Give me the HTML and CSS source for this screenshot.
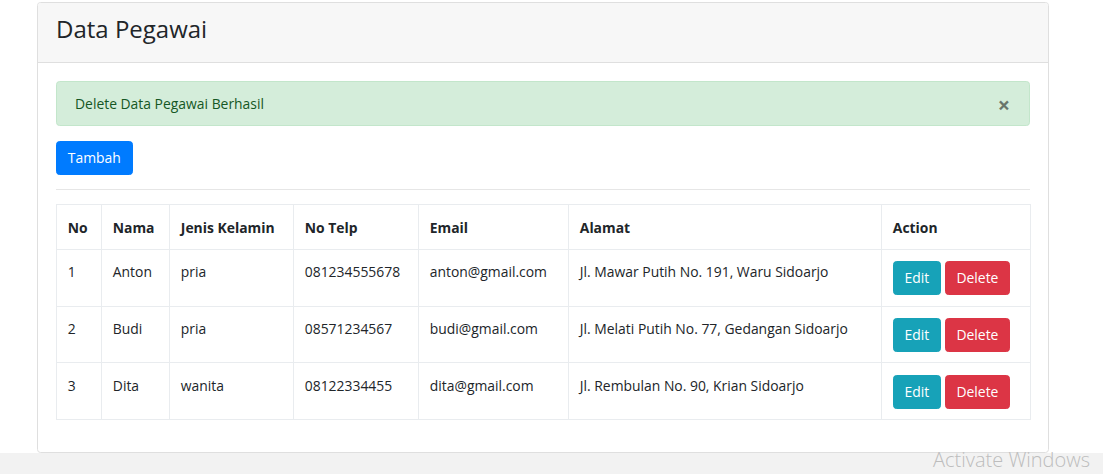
FILE: index.html
```html
<!DOCTYPE html>
<html lang="id">
<head>
<meta charset="utf-8">
<title>Data Pegawai</title>
<link rel="stylesheet" href="styles.css">
</head>
<body>
<div class="page">
  <div class="card">
    <div class="card-header">
      <h3 class="card-title">Data Pegawai</h3>
    </div>
    <div class="card-body">
      <div class="alert">
        <span>Delete Data Pegawai Berhasil</span>
        <button class="close" type="button">&times;</button>
      </div>
      <button class="btn btn-primary" type="button">Tambah</button>
      <hr class="divider">
      <table class="table">
        <colgroup>
          <col class="c-no"><col class="c-nama"><col class="c-jk"><col class="c-telp"><col class="c-email"><col class="c-alamat"><col class="c-action">
        </colgroup>
        <thead>
          <tr><th>No</th><th>Nama</th><th>Jenis Kelamin</th><th>No Telp</th><th>Email</th><th>Alamat</th><th>Action</th></tr>
        </thead>
        <tbody>
          <tr><td>1</td><td>Anton</td><td>pria</td><td>081234555678</td><td>anton@gmail.com</td><td>Jl. Mawar Putih No. 191, Waru Sidoarjo</td><td><button class="btn btn-info" type="button">Edit</button> <button class="btn btn-danger" type="button">Delete</button></td></tr>
          <tr><td>2</td><td>Budi</td><td>pria</td><td>08571234567</td><td>budi@gmail.com</td><td>Jl. Melati Putih No. 77, Gedangan Sidoarjo</td><td><button class="btn btn-info" type="button">Edit</button> <button class="btn btn-danger" type="button">Delete</button></td></tr>
          <tr><td>3</td><td>Dita</td><td>wanita</td><td>08122334455</td><td>dita@gmail.com</td><td>Jl. Rembulan No. 90, Krian Sidoarjo</td><td><button class="btn btn-info" type="button">Edit</button> <button class="btn btn-danger" type="button">Delete</button></td></tr>
        </tbody>
      </table>
    </div>
  </div>
</div>
<div class="footer"></div>
<div class="watermark">Activate Windows</div>
</body>
</html>
```

FILE: styles.css
```css
html, body {
  margin: 0;
  padding: 0;
}
body {
  font-family: "Open Sans", "Noto Sans", sans-serif;
  font-size: 13.9px;
  line-height: 21.6px;
  color: #212529;
  background: #fff;
  height: 474px;
  overflow: hidden;
  position: relative;
}
.page {
  padding-top: 2px;
  padding-left: 37px;
  background: #fff;
}
.card {
  width: 1012px;
  box-sizing: border-box;
  border: 1px solid #dfdfdf;
  border-radius: 3.6px;
  background: #fff;
}
.card-header {
  background: #f7f7f7;
  border-bottom: 1px solid #dfdfdf;
  padding: 10.8px 18px;
  border-radius: 3px 3px 0 0;
}
.card-title {
  margin: 0 0 7.2px;
  font-size: 24px;
  line-height: 30.24px;
  font-weight: 400;
}
.card-body {
  padding: 18px 18px 17px;
}
.alert {
  position: relative;
  background: #d4edda;
  border: 1px solid #c3e6cb;
  color: #155724;
  border-radius: 3.6px;
  padding: 10.8px 57.6px 10.8px 18px;
  margin-bottom: 14.4px;
}
.close {
  position: absolute;
  top: 0;
  right: 0;
  padding: 11.5px 19px 10px;
  border: 0;
  background: transparent;
  font-family: inherit;
  font-size: 21.6px;
  line-height: 21.6px;
  font-weight: 700;
  color: #000;
  opacity: .5;
}
.btn {
  display: inline-block;
  font-family: inherit;
  font-size: 13.9px;
  line-height: 21.6px;
  padding: 5.4px 10.8px;
  border: 1px solid transparent;
  border-radius: 3.6px;
  color: #fff;
  vertical-align: middle;
  margin: 0;
}
.btn-primary { background: #007bff; border-color: #007bff; }
.btn-info { background: #17a2b8; border-color: #17a2b8; }
.btn-danger { background: #dc3545; border-color: #dc3545; }
.divider {
  margin: 14.4px 0 14px;
  border: 0;
  border-top: 1px solid #e6e6e6;
}
.table {
  width: 974px;
  table-layout: fixed;
  border-collapse: collapse;
  margin-bottom: 14.4px;
}
.c-no { width: 45px; }
.c-nama { width: 68px; }
.c-jk { width: 124px; }
.c-telp { width: 125px; }
.c-email { width: 150px; }
.c-alamat { width: 313px; }
.c-action { width: 149px; }
.table th, .table td {
  border: 1px solid #e9ecef;
  padding: 11.3px 10.8px 10.3px;
  text-align: left;
  vertical-align: top;
  white-space: nowrap;
}
.table th {
  font-weight: 700;
}
.footer {
  height: 30px;
  background: #f2f2f2;
}
.watermark {
  position: absolute;
  left: 933px;
  top: 448px;
  font-family: "Open Sans", sans-serif;
  font-weight: 300;
  font-size: 20px;
  line-height: 24px;
  color: #bdbdbd;
}
```
